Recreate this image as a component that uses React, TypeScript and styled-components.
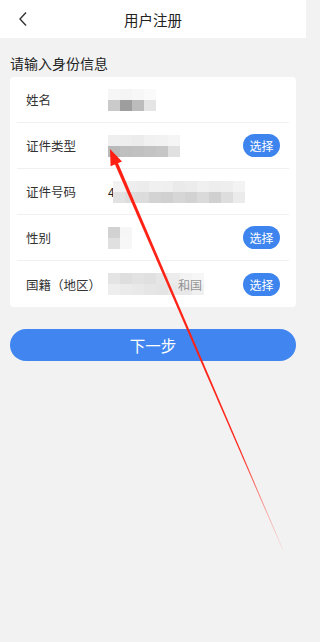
import styled, { createGlobalStyle } from "styled-components";

const GlobalStyle = createGlobalStyle`
  html, body {
    margin: 0;
    padding: 0;
    background: #f2f2f2;
  }
  body {
    font-family: "Noto Sans CJK SC", "Noto Sans", sans-serif;
    color: #333;
  }
`;

// mosaic cells for blurred values, one array per row
type MosaicProps = { rows: string[][]; cell?: number; cellH?: number };

const Mosaic = ({ rows, cell = 12, cellH = 11 }: MosaicProps) => (
  <MosaicGrid>
    {rows.map((r, i) => (
      <MosaicRow key={i}>
        {r.map((c, j) => (
          <Cell key={j} $w={cell} $h={cellH} $c={c} />
        ))}
      </MosaicRow>
    ))}
  </MosaicGrid>
);

// built at render time so the styled parts below are defined
const getFields = () => [
  {
    label: "姓名",
    pick: false,
    value: (
      <Mosaic
        rows={[
          ["#f6f6f6", "#f4f4f4", "#f7f7f7", "#fafafa"],
          ["#cacaca", "#9e9e9e", "#bcbcbc", "#e5e5e5"],
        ]}
      />
    ),
  },
  {
    label: "证件类型",
    pick: true,
    value: (
      <Mosaic
        rows={[
          ["#efefef", "#eeeeee", "#ececec", "#f1f1f1", "#f2f2f2", "#f5f5f5"],
          ["#b9b9b9", "#bfbfbf", "#c1c1c1", "#c3c3c3", "#c6c6c6", "#e0e0e0"],
        ]}
      />
    ),
  },
  {
    label: "证件号码",
    pick: false,
    value: (
      <NumberValue>
        <Digit>4</Digit>
        <Mosaic
          rows={[
            ["#f2f2f2", "#eeeeee", "#ececec", "#f0f0f0", "#efefef", "#eaeaea", "#ececec", "#f0f0f0", "#ededed", "#eeeeee", "#f3f3f3"],
            ["#e2e2e2", "#dddddd", "#dcdcdc", "#d3d3d3", "#d0d0d0", "#d6d6d6", "#d2d2d2", "#dadada", "#d0d0d0", "#dddddd", "#ebebeb"],
          ]}
        />
      </NumberValue>
    ),
  },
  {
    label: "性别",
    pick: true,
    value: (
      <Mosaic
        rows={[
          ["#d2d2d2", "#f6f6f6"],
          ["#e0e0e0", "#f7f7f7"],
        ]}
      />
    ),
  },
  {
    label: "国籍（地区）",
    pick: true,
    value: (
      <NationValue>
        <Mosaic
          rows={[
            ["#e4e4e4", "#dedede", "#e2e2e2", "#e0e0e0", "#e6e6e6", "#ececec", "#f3f3f3", "#f6f6f6"],
            ["#eeeeee", "#ebebeb", "#e9e9e9", "#e6e6e6", "#e4e4e4", "#e9e9e9", "#e8e8e8", "#f0f0f0"],
          ]}
        />
        <NationTail>和国</NationTail>
      </NationValue>
    ),
  },
];

const App = (): JSX.Element => {
  const fields = getFields();

  return (
    <Page>
      <GlobalStyle />
      <Header>
        <Back>
          <svg width="10" height="16" viewBox="0 0 10 16">
            <path d="M8 1.5L2 8l6 6.5" fill="none" stroke="#333" strokeWidth="1.4" />
          </svg>
        </Back>
        <Title>用户注册</Title>
      </Header>

      <SectionTitle>请输入身份信息</SectionTitle>

      <Card>
        {fields.map((f) => (
          <Row key={f.label}>
            <Label>{f.label}</Label>
            <Value>{f.value}</Value>
            {f.pick && <PickButton>选择</PickButton>}
          </Row>
        ))}
      </Card>

      <NextButton>下一步</NextButton>

      {/* red annotation arrow drawn over the screenshot */}
      <Arrow width="306" height="642" viewBox="0 0 306 642">
        <defs>
          <linearGradient id="fade" x1="110" y1="149" x2="283" y2="550" gradientUnits="userSpaceOnUse">
            <stop offset="0" stopColor="#ff1e12" stopOpacity="1" />
            <stop offset="0.75" stopColor="#ff1e12" stopOpacity="0.95" />
            <stop offset="1" stopColor="#ff1e12" stopOpacity="0.1" />
          </linearGradient>
        </defs>
        <polygon points="110,149 122,161.5 110.6,166.3" fill="#ff1e12" />
        <polygon points="117.9,162.8 114.8,164.1 282.8,550.2 283.3,550" fill="url(#fade)" />
      </Arrow>
    </Page>
  );
};

export default App;

const Page = styled.div`
  position: relative;
  width: 306px;
  height: 642px;
  background: #f2f2f2;
  overflow: hidden;
`;

const Header = styled.div`
  height: 38px;
  background: #fff;
  display: flex;
  align-items: center;
  justify-content: center;
  position: relative;
`;

const Back = styled.div`
  position: absolute;
  left: 18px;
  top: 11px;
  display: flex;
`;

const Title = styled.div`
  font-size: 14.5px;
  color: #222;
`;

const SectionTitle = styled.div`
  padding: 14px 10px 0;
  height: 25px;
  font-size: 14px;
  line-height: 22px;
  color: #222;
`;

const Card = styled.div`
  margin: 0 10px;
  background: #fff;
  border-radius: 4px;
  padding: 0 7px;
`;

const Row = styled.div`
  box-sizing: border-box;
  height: 46px;
  display: flex;
  align-items: center;
  padding: 0 9px;
  border-bottom: 1px solid #f0f0f0;

  &:last-child {
    border-bottom: none;
  }
`;

const Label = styled.div`
  width: 82px;
  flex-shrink: 0;
  font-size: 12.5px;
  color: #333;
`;

const Value = styled.div`
  flex: 1;
  display: flex;
  align-items: center;
`;

const MosaicGrid = styled.div`
  display: flex;
  flex-direction: column;
`;

const MosaicRow = styled.div`
  display: flex;
`;

const Cell = styled.div<{ $w: number; $h: number; $c: string }>`
  width: ${(p) => p.$w}px;
  height: ${(p) => p.$h}px;
  background: ${(p) => p.$c};
`;

const NumberValue = styled.div`
  display: flex;
  align-items: center;
`;

const Digit = styled.span`
  font-size: 12px;
  color: #222;
  margin-right: -2px;
`;

const NationValue = styled.div`
  display: flex;
  align-items: center;
`;

const NationTail = styled.span`
  font-size: 12px;
  color: #444;
  margin-left: -26px;
  opacity: 0.55;
`;

const PickButton = styled.div`
  width: 37px;
  height: 23px;
  border-radius: 12px;
  background: #3d84ee;
  color: #fff;
  font-size: 12px;
  display: flex;
  align-items: center;
  justify-content: center;
  flex-shrink: 0;
`;

const NextButton = styled.div`
  margin: 22px 10px 0;
  height: 32px;
  border-radius: 16px;
  background: #4186f0;
  color: #fff;
  font-size: 15.5px;
  display: flex;
  align-items: center;
  justify-content: center;
`;

const Arrow = styled.svg`
  position: absolute;
  left: 0;
  top: 0;
  pointer-events: none;
`;
